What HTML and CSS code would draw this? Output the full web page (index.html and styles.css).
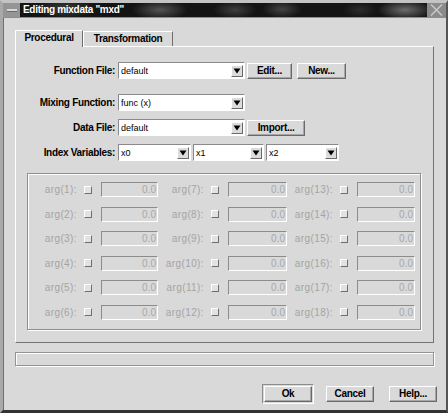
FILE: index.html
```html
<!DOCTYPE html>
<html>
<head>
<meta charset="utf-8">
<link rel="stylesheet" href="styles.css">
</head>
<body>
<div class="window">
  <div class="titlebar">
    <div class="tb-menu"><span class="dash"></span></div>
    <div class="tb-title">Editing mixdata "mxd"</div>
    <div class="tb-close">
      <svg width="19" height="14" viewBox="0 0 19 14"><path d="M4 1.5 L15 12.5 M15 1.5 L4 12.5" stroke="#c6c6c6" stroke-width="1.6" fill="none"/></svg>
    </div>
  </div>
  <div class="client">
    <div class="tabs">
      <div class="tab active">Procedural</div>
      <div class="tab inactive">Transformation</div>
    </div>
    <div class="panel">
      <div class="row r1">
        <div class="lbl">Function File:</div>
        <div class="combo w127"><span class="ctext">default</span><span class="arrow"><svg width="10" height="10" viewBox="0 0 10 10"><path d="M1.5 2.5 H8.5 L5 7.5 Z" fill="#000"/></svg></span></div>
        <div class="btn b-edit">Edit...</div>
        <div class="btn b-new">New...</div>
      </div>
      <div class="row r2">
        <div class="lbl">Mixing Function:</div>
        <div class="combo w127"><span class="ctext">func (x)</span><span class="arrow"><svg width="10" height="10" viewBox="0 0 10 10"><path d="M1.5 2.5 H8.5 L5 7.5 Z" fill="#000"/></svg></span></div>
      </div>
      <div class="row r3">
        <div class="lbl">Data File:</div>
        <div class="combo w127"><span class="ctext">default</span><span class="arrow"><svg width="10" height="10" viewBox="0 0 10 10"><path d="M1.5 2.5 H8.5 L5 7.5 Z" fill="#000"/></svg></span></div>
        <div class="btn b-import">Import...</div>
      </div>
      <div class="row r4">
        <div class="lbl">Index Variables:</div>
        <div class="combo w73"><span class="ctext">x0</span><span class="arrow"><svg width="10" height="10" viewBox="0 0 10 10"><path d="M1.5 2.5 H8.5 L5 7.5 Z" fill="#000"/></svg></span></div>
        <div class="combo w71 gap2"><span class="ctext">x1</span><span class="arrow"><svg width="10" height="10" viewBox="0 0 10 10"><path d="M1.5 2.5 H8.5 L5 7.5 Z" fill="#000"/></svg></span></div>
        <div class="combo w73 gap2"><span class="ctext">x2</span><span class="arrow"><svg width="10" height="10" viewBox="0 0 10 10"><path d="M1.5 2.5 H8.5 L5 7.5 Z" fill="#000"/></svg></span></div>
      </div>
      <div class="group">
        <div class="al">arg(1):</div><div class="cbc"><span class="cb"></span></div><div class="en">0.0</div>
        <div class="al">arg(7):</div><div class="cbc"><span class="cb"></span></div><div class="en">0.0</div>
        <div class="al">arg(13):</div><div class="cbc"><span class="cb"></span></div><div class="en">0.0</div>

        <div class="al">arg(2):</div><div class="cbc"><span class="cb"></span></div><div class="en">0.0</div>
        <div class="al">arg(8):</div><div class="cbc"><span class="cb"></span></div><div class="en">0.0</div>
        <div class="al">arg(14):</div><div class="cbc"><span class="cb"></span></div><div class="en">0.0</div>

        <div class="al">arg(3):</div><div class="cbc"><span class="cb"></span></div><div class="en">0.0</div>
        <div class="al">arg(9):</div><div class="cbc"><span class="cb"></span></div><div class="en">0.0</div>
        <div class="al">arg(15):</div><div class="cbc"><span class="cb"></span></div><div class="en">0.0</div>

        <div class="al">arg(4):</div><div class="cbc"><span class="cb"></span></div><div class="en">0.0</div>
        <div class="al">arg(10):</div><div class="cbc"><span class="cb"></span></div><div class="en">0.0</div>
        <div class="al">arg(16):</div><div class="cbc"><span class="cb"></span></div><div class="en">0.0</div>

        <div class="al">arg(5):</div><div class="cbc"><span class="cb"></span></div><div class="en">0.0</div>
        <div class="al">arg(11):</div><div class="cbc"><span class="cb"></span></div><div class="en">0.0</div>
        <div class="al">arg(17):</div><div class="cbc"><span class="cb"></span></div><div class="en">0.0</div>

        <div class="al">arg(6):</div><div class="cbc"><span class="cb"></span></div><div class="en">0.0</div>
        <div class="al">arg(12):</div><div class="cbc"><span class="cb"></span></div><div class="en">0.0</div>
        <div class="al">arg(18):</div><div class="cbc"><span class="cb"></span></div><div class="en">0.0</div>
      </div>
    </div>
    <div class="status"></div>
    <div class="buttons">
      <div class="okframe"><div class="btn b-dlg">Ok</div></div>
      <div class="btn b-dlg b-cancel">Cancel</div>
      <div class="btn b-dlg">Help...</div>
    </div>
  </div>
</div>
</body>
</html>
```
FILE: styles.css
```css
* { box-sizing: border-box; }
html, body { margin: 0; padding: 0; }
body {
  width: 448px;
  height: 413px;
  overflow: hidden;
  background: #d9d9d9;
  font-family: "Liberation Sans", Arial, Helvetica, sans-serif;
}
.window {
  width: 448px;
  height: 413px;
  border-style: solid;
  border-width: 3px 2px 3px 3px;
  border-color: #c4c4c4 #555555 #333333 #a9a9a9;
  background: #d9d9d9;
  display: flex;
  flex-direction: column;
}
.titlebar {
  height: 15px;
  display: flex;
  border-bottom: 1px solid #8e8e8e;
  flex: none;
}
.tb-menu {
  width: 17px;
  background: #959595;
  display: flex;
  align-items: center;
  justify-content: center;
}
.dash {
  display: block;
  width: 10px;
  height: 3px;
  background: #d8d8d8;
  border-bottom: 1px solid #6a6a6a;
  margin-left: 1px;
}
.tb-title {
  flex: 1;
  color: #fff;
  font-weight: bold;
  font-size: 10px;
  letter-spacing: -0.3px;
  line-height: 14px;
  padding-left: 3px;
  background:
    radial-gradient(ellipse 28px 10px at 140px 50%, rgba(110,110,110,0.7), rgba(110,110,110,0) 100%),
    radial-gradient(ellipse 30px 10px at 45px 40%, rgba(90,90,90,0.6), rgba(90,90,90,0) 100%),
    radial-gradient(ellipse 22px 9px at 215px 50%, rgba(90,90,90,0.6), rgba(90,90,90,0) 100%),
    radial-gradient(ellipse 20px 9px at 262px 45%, rgba(100,100,100,0.6), rgba(100,100,100,0) 100%),
    radial-gradient(ellipse 28px 10px at 385px 50%, rgba(130,130,130,0.8), rgba(130,130,130,0) 100%),
    radial-gradient(ellipse 18px 8px at 340px 50%, rgba(60,60,60,0.6), rgba(60,60,60,0) 100%),
    #141414;
}
.tb-close {
  width: 19px;
  background: #8b8b8b;
  display: flex;
  align-items: center;
  justify-content: center;
}
.tb-close svg { display: block; }

.client {
  flex: 1;
  border-left: 1px solid #6e6e6e;
  padding: 12px 0 0 11px;
  display: flex;
  flex-direction: column;
}
.tabs {
  height: 16px;
  display: flex;
  align-items: flex-end;
  flex: none;
}
.tab {
  font-weight: bold;
  font-size: 10px;
  letter-spacing: -0.3px;
  color: #000;
  text-align: center;
  background: #d9d9d9;
  border-top: 1px solid #ffffff;
  border-left: 1px solid #ffffff;
  border-right: 1px solid #6e6e6e;
}
.tab.active {
  width: 68px;
  height: 17px;
  line-height: 14px;
  margin-bottom: -1px;
  position: relative;
  z-index: 1;
}
.tab.inactive {
  width: 90px;
  height: 15px;
  line-height: 13px;
}
.panel {
  margin-right: 12px;
  height: 297px;
  flex: none;
  border-style: solid;
  border-width: 1px;
  border-color: #ffffff #737373 #737373 #ffffff;
  padding-top: 15px;
}
.row {
  height: 17px;
  display: flex;
  align-items: center;
}
.r2 { margin-top: 15px; }
.r3, .r4 { margin-top: 8px; }
.lbl {
  width: 100px;
  text-align: right;
  padding-right: 1px;
  font-weight: bold;
  font-size: 10px;
  letter-spacing: -0.3px;
  color: #000;
  margin-right: 2px;
}
.combo {
  height: 17px;
  background: #ffffff;
  border-style: solid;
  border-width: 1px;
  border-color: #8a8a8a #ffffff #ffffff #8a8a8a;
  display: flex;
  align-items: center;
  justify-content: space-between;
  padding: 0 1px 0 2px;
}
.w127 { width: 127px; }
.w73 { width: 73px; }
.w71 { width: 71px; }
.gap2 { margin-left: 2px; }
.ctext {
  font-size: 9px;
  color: #000;
}
.arrow {
  width: 12px;
  height: 12px;
  background: #dcdcdc;
  border-style: solid;
  border-width: 1px;
  border-color: #ffffff #6a6a6a #6a6a6a #ffffff;
  display: flex;
}
.arrow svg { display: block; }
.btn {
  height: 16px;
  background: #d9d9d9;
  border-style: solid;
  border-width: 1px;
  border-color: #ffffff #6a6a6a #6a6a6a #ffffff;
  box-shadow: inset -1px -1px 0 #a6a6a6;
  font-weight: bold;
  font-size: 10px;
  letter-spacing: -0.3px;
  color: #000;
  text-align: center;
  line-height: 13px;
}
.b-edit { width: 45px; margin-left: 2px; }
.b-new { width: 49px; margin-left: 5px; }
.b-import { width: 58px; margin-left: 2px; }

.group {
  margin: 12px 12px 0 11px;
  border: 1px solid #8e8e8e;
  box-shadow: inset 1px 1px 0 #ffffff, 1px 1px 0 #ffffff;
  padding: 8px 0 9px 0;
  display: grid;
  grid-template-columns: 52px 17px 63px 47px 17px 65px 47px 17px 64px;
  grid-auto-rows: 15px;
  row-gap: 9.6px;
  align-items: center;
}
.al {
  text-align: right;
  padding-right: 3px;
  font-size: 10px;
  letter-spacing: 0.4px;
  color: #a4a4a4;
  white-space: nowrap;
}
.cbc { display: flex; align-items: center; }
.cb {
  display: block;
  width: 8px;
  height: 8px;
  margin-left: 4px;
  background: #e2e2e2;
  border-style: solid;
  border-width: 1px;
  border-color: #ffffff #6e6e6e #6e6e6e #ffffff;
}
.en {
  height: 15px;
  margin: 0 2px 0 4px;
  border-style: solid;
  border-width: 1px;
  border-color: #8c8c8c #ffffff #ffffff #8c8c8c;
  font-size: 10px;
  color: #a8a8a8;
  text-align: right;
  padding-right: 1px;
  line-height: 13px;
}
.status {
  margin: 9px 12px 0 0;
  height: 14px;
  flex: none;
  border: 1px solid #939393;
  box-shadow: inset 1px 1px 0 #ffffff, 1px 1px 0 #ffffff;
}
.buttons {
  margin: 18px 9px 0 0;
  display: flex;
  justify-content: flex-end;
  align-items: center;
  flex: none;
}
.okframe {
  border-style: solid;
  border-width: 1px;
  border-color: #8c8c8c #ffffff #ffffff #8c8c8c;
  padding: 1px;
  margin-right: 12px;
}
.b-dlg { width: 48px; }
.b-cancel { margin-right: 15px; }
```
